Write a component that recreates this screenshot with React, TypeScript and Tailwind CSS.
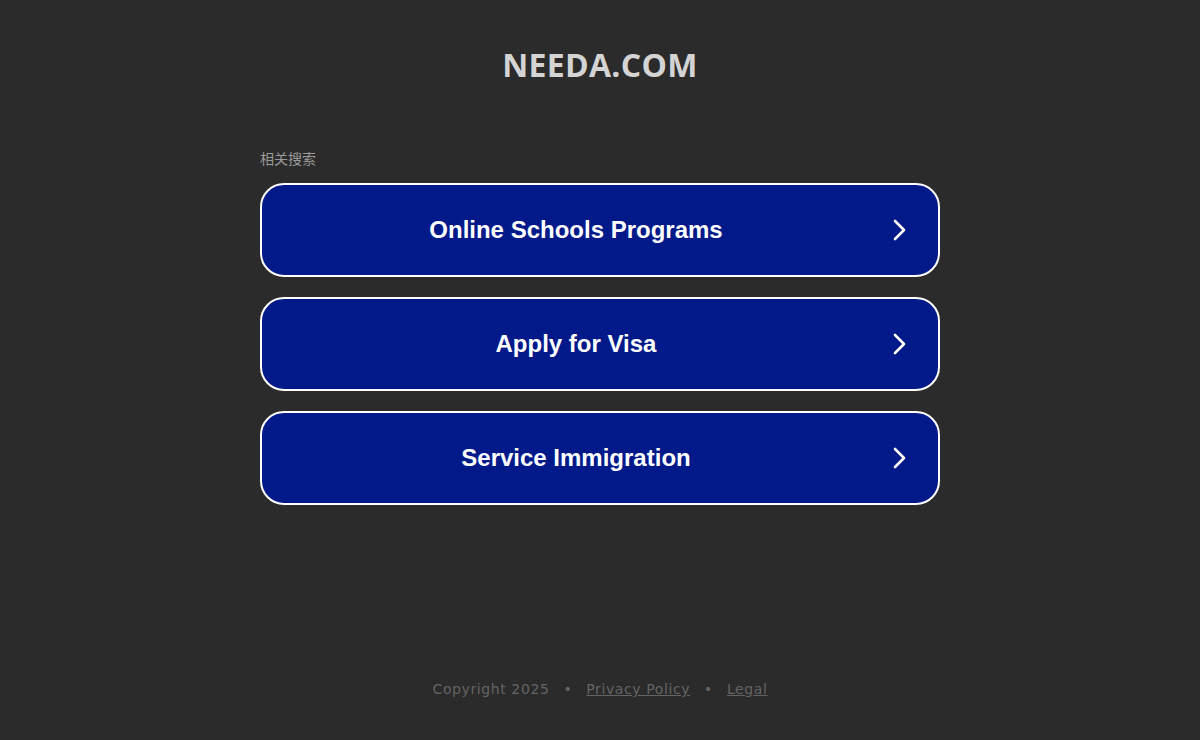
import React from 'react';

const links = ['Online Schools Programs', 'Apply for Visa', 'Service Immigration'];

function Chevron() {
  return (
    <svg width="18" height="24" viewBox="0 0 18 24" fill="none" stroke="white" strokeWidth="2.6" strokeLinecap="round" strokeLinejoin="round">
      <path d="M5 3 L14 12 L5 21" />
    </svg>
  );
}

export default function App() {
  return (
    <div className="min-h-[740px] h-[740px] bg-[#2b2b2b] flex flex-col items-center">
      <h1 className="mt-[45px] text-[32px] leading-[40px] font-bold text-[#d4d4d4] tracking-[0.3px] font-['Open_Sans',sans-serif]">
        NEEDA.COM
      </h1>

      <div className="mt-[64px] w-[680px]">
        <div className="text-[14px] leading-[20px] text-[#9a9a9a] font-['Liberation_Sans','Noto_Sans_CJK_SC',sans-serif]">
          相关搜索
        </div>
        <div className="mt-[14px] flex flex-col gap-[20px]">
          {links.map((l) => (
            <a
              key={l}
              href="#"
              className="h-[94px] rounded-[24px] border-2 border-white bg-[#011989] flex items-center pl-0 pr-[30px]"
            >
              <span className="flex-1 text-center text-white font-bold text-[24px] font-['Liberation_Sans',Arial,sans-serif]">
                {l}
              </span>
              <Chevron />
            </a>
          ))}
        </div>
      </div>

      <div className="mt-auto mb-[40px] flex items-center gap-[14px] text-[14px] tracking-[0.6px] text-[#646464] font-['DejaVu_Sans',sans-serif]">
        <span>Copyright 2025</span>
        <span>•</span>
        <a href="#" className="underline">Privacy Policy</a>
        <span>•</span>
        <a href="#" className="underline">Legal</a>
      </div>
    </div>
  );
}
